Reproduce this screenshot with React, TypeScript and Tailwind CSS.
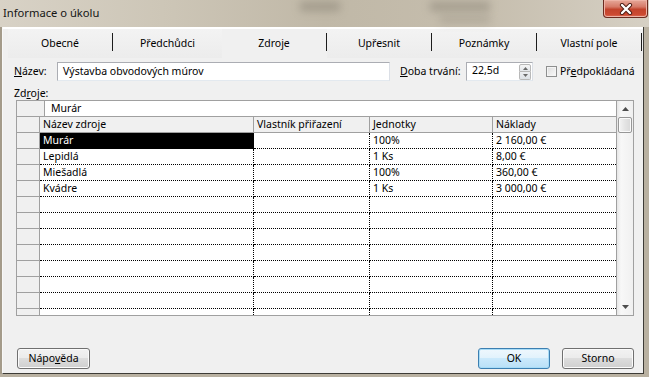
import React from "react";

const tabs = [
  { label: "Obecné", w: "w-[105px]", sep: true },
  { label: "Předchůdci", w: "w-[109px]", sep: false },
  { label: "Zdroje", w: "w-[105px]", sep: true, active: true },
  { label: "Upřesnit", w: "w-[105px]", sep: true },
  { label: "Poznámky", w: "w-[105px]", sep: true },
  { label: "Vlastní pole", w: "w-[105px]", sep: true },
];

const cols = [
  { label: "Název zdroje", w: "w-[214px]" },
  { label: "Vlastník přiřazení", w: "w-[116px]" },
  { label: "Jednotky", w: "w-[123px]" },
  { label: "Náklady", w: "w-[123px]" },
];

const rows: string[][] = [
  ["Murár", "", "100%", "2 160,00 €"],
  ["Lepidlá", "", "1 Ks", "8,00 €"],
  ["Miešadlá", "", "100%", "360,00 €"],
  ["Kvádre", "", "1 Ks", "3 000,00 €"],
  ["", "", "", ""],
  ["", "", "", ""],
  ["", "", "", ""],
  ["", "", "", ""],
  ["", "", "", ""],
  ["", "", "", ""],
  ["", "", "", ""],
  ["", "", "", ""],
];

function Arrow({ up, color = "#4d4d4d" }: { up?: boolean; color?: string }) {
  return (
    <svg width="7" height="4" viewBox="0 0 7 4">
      <path d={up ? "M3.5 0L7 4H0Z" : "M0 0H7L3.5 4Z"} fill={color} />
    </svg>
  );
}

function CloseButton() {
  return (
    <div className="w-[45px] h-[18px] mr-[1px] rounded-b-[4px] border border-t-0 border-[#6b2b20] bg-[linear-gradient(#e6a899_0%,#d67a68_40%,#c2432c_55%,#cc4a32_85%,#e0705a_100%)] shadow-[inset_0_0_0_1px_#eeb3a6] flex items-center justify-center">
      <svg width="14" height="12" viewBox="0 0 14 12">
        <path d="M3 2L11 10M11 2L3 10" stroke="#4a1a12" strokeWidth="4.2" strokeLinecap="round" />
        <path d="M3 2L11 10M11 2L3 10" stroke="#ffffff" strokeWidth="2.4" strokeLinecap="round" />
      </svg>
    </div>
  );
}

function Button({ children, primary, w }: { children: React.ReactNode; primary?: boolean; w: string }) {
  return (
    <div
      className={
        w +
        " h-[21px] rounded-[3px] border flex items-center justify-center leading-none " +
        (primary
          ? "border-[#3c7fb1] bg-[linear-gradient(#eef7fd_0%,#e1f2fc_50%,#cbe9fb_50%,#b9e0f7_100%)] shadow-[inset_0_0_0_1px_#a8dcf7]"
          : "border-[#707070] bg-[linear-gradient(#f2f2f2_0%,#ebebeb_50%,#dddddd_50%,#cfcfcf_100%)] shadow-[inset_0_0_0_1px_#fbfbfb]")
      }
    >
      {children}
    </div>
  );
}

export default function App() {
  return (
    <div className="w-[649px] h-[377px] overflow-hidden flex flex-col bg-[#b3ab9b] font-['Noto_Sans',sans-serif] text-[10.5px] text-black">
      {/* Title bar */}
      <div className="relative h-[27px] shrink-0 flex bg-[linear-gradient(90deg,#d8d2c6_0%,#cdc6b7_25%,#c0b8a7_50%,#c6beae_75%,#d6d0c4_100%)]">
        <div className="absolute left-[300px] top-[2px] w-[40px] h-[9px] bg-[#8d8678] blur-[4px] opacity-60" />
        <div className="absolute left-[430px] top-[2px] w-[60px] h-[9px] bg-[#8d8678] blur-[4px] opacity-60" />
        <div className="absolute left-[440px] top-[16px] w-[50px] h-[7px] bg-[#8d8678] blur-[4px] opacity-40" />
        <span className="relative flex-1 pl-[3px] pt-[5px] text-[11.2px] leading-[16px] text-[#141414]">Informace o úkolu</span>
        <CloseButton />
      </div>

      <div className="flex h-[347px] shrink-0">
        <div className="w-[2px] bg-[#a49b8a]" />
        {/* Client area */}
        <div className="w-[642px] flex flex-col bg-[#f0f0f0] border-l border-l-[#f8f8f8] border-r border-b border-r-[#3d3b36] border-b-[#3d3b36]">
          {/* Tabs */}
          <div className="flex h-[31px] shrink-0 border-t-2 border-white pl-[5px]">
            {tabs.map((t) => (
              <div
                key={t.label}
                className={
                  t.w +
                  " flex h-[29px] " +
                  (t.active ? "bg-[#f0f0f0]" : "bg-[linear-gradient(#f3f3f3,#ececec)]")
                }
              >
                <span className="flex-1 flex items-center justify-center pt-[1px]">{t.label}</span>
                {t.sep && <span className="w-px h-[18px] mt-[4px] bg-[#1c1c1c]" />}
              </div>
            ))}
          </div>

          {/* Name row */}
          <div className="flex items-center h-[19px] mt-[4px] pl-[11px] shrink-0">
            <span className="w-[43px]">
              <span className="underline">N</span>ázev:
            </span>
            <div className="w-[333px] h-[19px] bg-white border border-[#abadb3] border-b-[#e3e9ef] border-r-[#dbdfe6] flex items-center pl-[5px]">
              Výstavba obvodových múrov
            </div>
            <span className="ml-[10px] w-[66px]">
              <span className="underline">D</span>oba trvání:
            </span>
            <div className="w-[67px] h-[19px] bg-white border border-[#abadb3] border-b-[#e3e9ef] border-r-[#dbdfe6] flex">
              <span className="flex-1 pl-[5px] leading-[15px]">22,5d</span>
              <div className="w-[12px] mr-[1px] mt-[1px] flex flex-col">
                <div className="h-[8px] rounded-t-[2px] border border-[#b8b8b8] bg-[linear-gradient(#f5f5f5,#e3e6ea)] flex items-center justify-center">
                  <svg width="5" height="3" viewBox="0 0 5 3"><path d="M2.5 0L5 3H0Z" fill="#6a6a6a" /></svg>
                </div>
                <div className="h-[8px] rounded-b-[2px] border border-t-0 border-[#b8b8b8] bg-[linear-gradient(#eceef1,#dde1e6)] flex items-center justify-center">
                  <svg width="5" height="3" viewBox="0 0 5 3"><path d="M0 0H5L2.5 3Z" fill="#6a6a6a" /></svg>
                </div>
              </div>
            </div>
            <div className="ml-[13px] w-[11px] h-[11px] border border-[#8e8f8f] bg-[linear-gradient(135deg,#dcdcdc,#fafafa)] shadow-[inset_0_0_0_1px_#f4f4f4]" />
            <span className="ml-[3px]">
              Př<span className="underline">e</span>dpokládaná
            </span>
          </div>

          {/* Resources label */}
          <div className="h-[14px] leading-[14px] mt-[5px] pl-[11px] shrink-0">
            Zd<span className="underline">r</span>oje:
          </div>

          {/* Grid */}
          <div className="ml-[13px] w-[618px] h-[216px] shrink-0 border border-[#a0a0a0] bg-white flex overflow-hidden">
            <div className="w-[599px] flex flex-col">
              {/* entry bar */}
              <div className="flex h-[16px] shrink-0 border-b border-[#a0a0a0]">
                <div className="w-[28px] bg-[#f0f0f0] border-r border-[#a0a0a0]" />
                <span className="pl-[6px] leading-[15px]">Murár</span>
              </div>
              {/* header */}
              <div className="flex h-[16px] shrink-0">
                <div className="w-[23px] bg-[#f0f0f0] border-r border-b border-[#a0a0a0]" />
                {cols.map((c, i) => (
                  <div
                    key={c.label}
                    className={
                      c.w +
                      " bg-[#f0f0f0] border-b border-[#a0a0a0] pl-[3px] leading-[15px] whitespace-nowrap overflow-hidden " +
                      (i < 3 ? "border-r" : "")
                    }
                  >
                    {c.label}
                  </div>
                ))}
              </div>
              {/* rows */}
              {rows.map((r, ri) => (
                <div key={ri} className="flex h-[16px] shrink-0">
                  <div className="w-[23px] bg-[#f0f0f0] border-r border-b border-[#a0a0a0]" />
                  {r.map((v, ci) => (
                    <div
                      key={ci}
                      className={
                        cols[ci].w +
                        " border-b border-dotted border-black pl-[3px] leading-[15px] whitespace-nowrap overflow-hidden " +
                        (ci < 3 ? "border-r " : "") +
                        (ri === 0 && ci === 0 ? "bg-black text-white" : "")
                      }
                    >
                      {v}
                    </div>
                  ))}
                </div>
              ))}
            </div>
            {/* scrollbar */}
            <div className="w-[17px] flex flex-col border-l border-[#a0a0a0] bg-[linear-gradient(90deg,#e6e6e6,#f8f8f8_25%,#f0f0f0)]">
              <div className="h-[16px] flex items-center justify-center">
                <Arrow up />
              </div>
              <div className="mx-[1px] h-[16px] rounded-[2px] border border-[#979797] bg-[linear-gradient(90deg,#f4f4f4,#e4e4e4_50%,#d8d8d8)] shadow-[inset_0_0_0_1px_#fafafa]" />
              <div className="flex-1" />
              <div className="h-[16px] flex items-center justify-center">
                <Arrow />
              </div>
            </div>
          </div>

          {/* Buttons */}
          <div className="flex h-[21px] mt-[32px] pl-[14px] pr-[9px] shrink-0">
            <Button w="w-[73px]">
              <span>
                Nápo<span className="underline">v</span>ěda
              </span>
            </Button>
            <div className="flex-1" />
            <Button w="w-[72px]" primary>
              OK
            </Button>
            <div className="w-[12px]" />
            <Button w="w-[72px]">Storno</Button>
          </div>
        </div>
        <div className="w-[5px] bg-[#b9b1a1]" />
      </div>
      <div className="h-[3px] bg-[#b9b1a1]" />
    </div>
  );
}
